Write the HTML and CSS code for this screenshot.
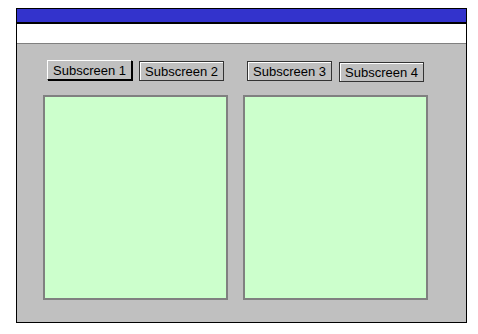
FILE: index.html
```html
<!DOCTYPE html>
<html lang="en">
<head>
    <meta charset="UTF-8">
    <title>Subscreens</title>
    <link rel="stylesheet" href="styles.css">
</head>
<body>

<div class="window">
    <div class="title-bar"></div>
    <div class="menu-bar"></div>
    <div class="content">
        <div class="column">
            <div class="tabs">
                <button class="tab active">Subscreen 1</button>
                <button class="tab">Subscreen 2</button>
            </div>
            <div class="panel"></div>
        </div>
        <div class="column">
            <div class="tabs">
                <button class="tab">Subscreen 3</button>
                <button class="tab low">Subscreen 4</button>
            </div>
            <div class="panel"></div>
        </div>
    </div>
</div>

</body>
</html>
```

FILE: styles.css
```css
body { margin: 0; background: #fff; font-family: "Liberation Sans", Arial, sans-serif; }
.window { margin: 8px 0 0 16px; width: 451px; height: 315px; box-sizing: border-box; border: 1px solid #000; background: #c0c0c0; display: flex; flex-direction: column; }
.title-bar { height: 13px; background: #3333cc; border-bottom: 2px solid #000; }
.menu-bar { height: 19px; background: #fff; border-bottom: 1px solid #808080; }
.content { display: grid; grid-template-columns: 185px 185px; column-gap: 15px; padding: 16px 0 0 26px; }
.column { display: flex; flex-direction: column; align-items: center; gap: 13px; }
.tabs { display: flex; align-items: flex-start; gap: 7px; height: 22px; }
.tab { width: 85px; height: 20px; margin-top: 1px; padding: 0; font-family: "Liberation Sans", Arial, sans-serif; font-size: 13px; color: #000; background: #c0c0c0; border: 1px solid #333; box-shadow: inset 1px 1px 0 #fff; }
.tab.active { margin-top: 0; border-color: #fff #000 #000 #fff; box-shadow: 1px 1px 0 #000; }
.tab.low { margin-top: 2px; }
.panel { width: 185px; height: 205px; box-sizing: border-box; border: 2px solid #808080; background: #ccffcc; }
```
